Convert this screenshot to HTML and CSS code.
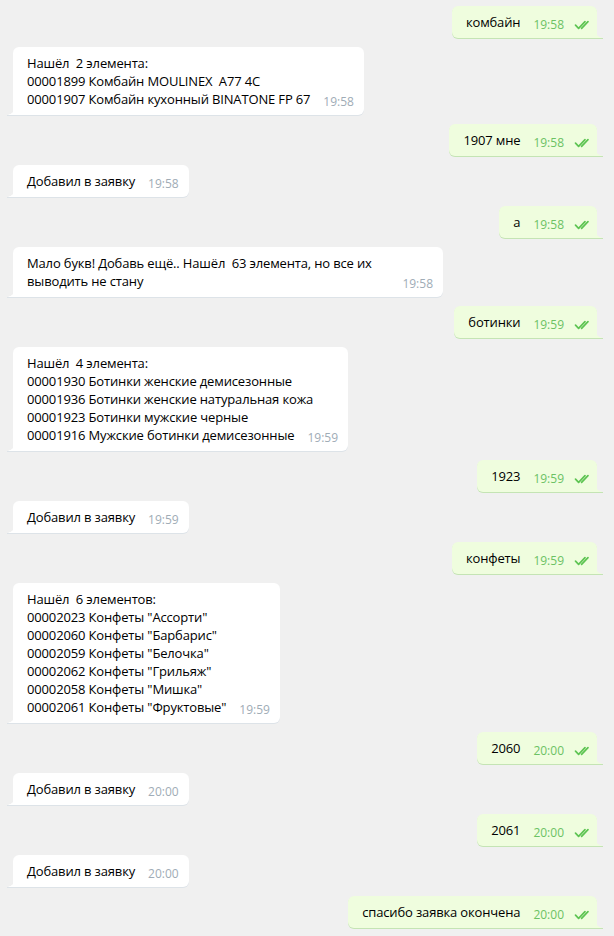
FILE: index.html
```html
<!DOCTYPE html>
<html lang="ru">
<head>
    <meta charset="UTF-8">
    <meta name="viewport" content="width=device-width, initial-scale=1.0">
    <title>Чат</title>
    <link rel="stylesheet" href="styles.css">
</head>
<body>

<main class="chat">
    <div class="msg out">
        <span class="text">комбайн</span><span class="meta"><span class="time">19:58</span><svg class="check" viewBox="0 0 16 10"><path d="M1.5 5.2 L4.6 8.3 L11 1.7 M7.6 8.3 L14 1.7"/></svg></span>
    </div>

    <div class="msg in">
        <span class="text">Нашёл&nbsp; 2 элемента:<br>00001899 Комбайн MOULINEX&nbsp; A77 4C<br>00001907 Комбайн кухонный BINATONE FP 67</span><span class="meta"><span class="time">19:58</span></span>
    </div>

    <div class="msg out">
        <span class="text">1907 мне</span><span class="meta"><span class="time">19:58</span><svg class="check" viewBox="0 0 16 10"><path d="M1.5 5.2 L4.6 8.3 L11 1.7 M7.6 8.3 L14 1.7"/></svg></span>
    </div>

    <div class="msg in">
        <span class="text">Добавил в заявку</span><span class="meta"><span class="time">19:58</span></span>
    </div>

    <div class="msg out">
        <span class="text">а</span><span class="meta"><span class="time">19:58</span><svg class="check" viewBox="0 0 16 10"><path d="M1.5 5.2 L4.6 8.3 L11 1.7 M7.6 8.3 L14 1.7"/></svg></span>
    </div>

    <div class="msg in">
        <span class="text">Мало букв! Добавь ещё.. Нашёл&nbsp; 63 элемента, но все их выводить не стану</span><span class="meta"><span class="time">19:58</span></span>
    </div>

    <div class="msg out">
        <span class="text">ботинки</span><span class="meta"><span class="time">19:59</span><svg class="check" viewBox="0 0 16 10"><path d="M1.5 5.2 L4.6 8.3 L11 1.7 M7.6 8.3 L14 1.7"/></svg></span>
    </div>

    <div class="msg in">
        <span class="text">Нашёл&nbsp; 4 элемента:<br>00001930 Ботинки женские демисезонные<br>00001936 Ботинки женские натуральная кожа<br>00001923 Ботинки мужские черные<br>00001916 Мужские ботинки демисезонные</span><span class="meta"><span class="time">19:59</span></span>
    </div>

    <div class="msg out">
        <span class="text">1923</span><span class="meta"><span class="time">19:59</span><svg class="check" viewBox="0 0 16 10"><path d="M1.5 5.2 L4.6 8.3 L11 1.7 M7.6 8.3 L14 1.7"/></svg></span>
    </div>

    <div class="msg in">
        <span class="text">Добавил в заявку</span><span class="meta"><span class="time">19:59</span></span>
    </div>

    <div class="msg out">
        <span class="text">конфеты</span><span class="meta"><span class="time">19:59</span><svg class="check" viewBox="0 0 16 10"><path d="M1.5 5.2 L4.6 8.3 L11 1.7 M7.6 8.3 L14 1.7"/></svg></span>
    </div>

    <div class="msg in">
        <span class="text">Нашёл&nbsp; 6 элементов:<br>00002023 Конфеты "Ассорти"<br>00002060 Конфеты "Барбарис"<br>00002059 Конфеты "Белочка"<br>00002062 Конфеты "Грильяж"<br>00002058 Конфеты "Мишка"<br>00002061 Конфеты "Фруктовые"</span><span class="meta"><span class="time">19:59</span></span>
    </div>

    <div class="msg out">
        <span class="text">2060</span><span class="meta"><span class="time">20:00</span><svg class="check" viewBox="0 0 16 10"><path d="M1.5 5.2 L4.6 8.3 L11 1.7 M7.6 8.3 L14 1.7"/></svg></span>
    </div>

    <div class="msg in">
        <span class="text">Добавил в заявку</span><span class="meta"><span class="time">20:00</span></span>
    </div>

    <div class="msg out">
        <span class="text">2061</span><span class="meta"><span class="time">20:00</span><svg class="check" viewBox="0 0 16 10"><path d="M1.5 5.2 L4.6 8.3 L11 1.7 M7.6 8.3 L14 1.7"/></svg></span>
    </div>

    <div class="msg in">
        <span class="text">Добавил в заявку</span><span class="meta"><span class="time">20:00</span></span>
    </div>

    <div class="msg out">
        <span class="text">спасибо заявка окончена</span><span class="meta"><span class="time">20:00</span><svg class="check" viewBox="0 0 16 10"><path d="M1.5 5.2 L4.6 8.3 L11 1.7 M7.6 8.3 L14 1.7"/></svg></span>
    </div>
</main>

</body>
</html>
```

FILE: styles.css
```css
body {
    font-family: "Open Sans", "Noto Sans", sans-serif;
    font-size: 13px;
    background-color: #f0f0f0;
    color: #000;
    margin: 0;
    padding: 0;
}

.chat {
    display: flex;
    flex-direction: column;
    gap: 9px;
    padding: 6px 17px 6px 13px;
}

.msg {
    position: relative;
    box-sizing: border-box;
    max-width: 430px;
    padding: 7px 10px 7px 14px;
    border-radius: 6px;
    line-height: 18px;
}

.msg.in {
    align-self: flex-start;
    background-color: #fff;
    box-shadow: 0 1px 0 #dde3e8;
    border-bottom-left-radius: 0;
}

.msg.out {
    align-self: flex-end;
    background-color: #effdde;
    box-shadow: 0 1px 0 #c4e4b4;
    border-bottom-right-radius: 0;
    padding-right: 7px;
}

/* bubble tails */
.msg.in::before,
.msg.out::before {
    content: "";
    position: absolute;
    bottom: -1px;
    width: 6px;
    height: 9px;
}

.msg.in::before {
    left: -6px;
    background:
        linear-gradient(#dde3e8, #dde3e8) bottom / 100% 1px no-repeat,
        radial-gradient(circle at 0 0, transparent 7.5px, #fff 8px) top / 100% 8px no-repeat;
}

.msg.out::before {
    right: -6px;
    background:
        linear-gradient(#c4e4b4, #c4e4b4) bottom / 100% 1px no-repeat,
        radial-gradient(circle at 100% 0, transparent 7.5px, #effdde 8px) top / 100% 8px no-repeat;
}

.text {
    letter-spacing: -0.15px;
}

/* time sits at the right end of the last line */
.meta {
    float: right;
    display: flex;
    align-items: center;
    gap: 10px;
    height: 18px;
    margin: 3px 0 -3px 13px;
}

.time {
    font-size: 12px;
    color: #a0acb6;
}

.msg.out .time {
    color: #6cc264;
}

.check {
    width: 16px;
    height: 10px;
    fill: none;
    stroke: #5dc452;
    stroke-width: 1.7;
    stroke-linecap: round;
    stroke-linejoin: round;
}
```
